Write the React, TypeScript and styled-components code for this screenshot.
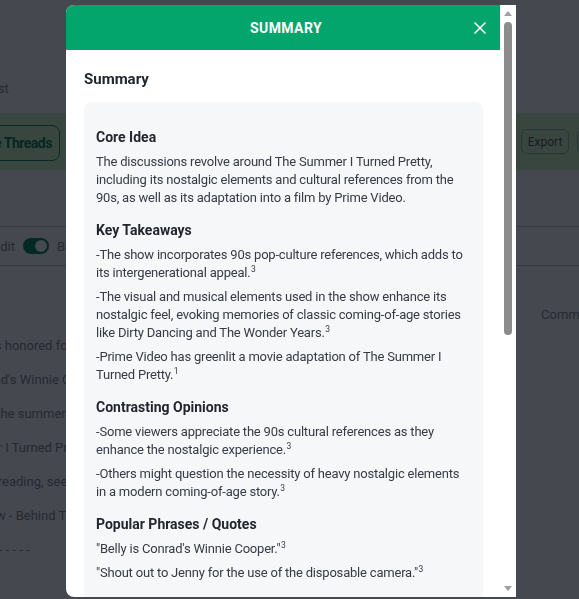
import React from 'react'
import styled, { createGlobalStyle } from 'styled-components'

const GlobalStyle = createGlobalStyle`
  html, body {
    margin: 0;
    padding: 0;
    height: 100%;
    overflow: hidden;
  }
  body {
    font-family: Roboto, "Liberation Sans", sans-serif;
    background: #fff;
  }
`

/* ---------- page behind the dialog ---------- */

const Page = styled.div`
  width: 760px;
  height: 100vh;
  margin-left: -80px;
  background: #fff;
  color: #8a8e95;
  font-size: 13px;
  display: flex;
  flex-direction: column;
`

const Crumbs = styled.div`
  height: 113px;
  box-sizing: border-box;
  display: flex;
  align-items: flex-end;
  padding: 0 0 15px 22px;
  line-height: 18px;
`

const ActionBand = styled.div`
  height: 57px;
  box-sizing: border-box;
  background: #d3f8c7;
  display: flex;
  align-items: flex-start;
  padding: 12px 58px 0 6px;
`

const OutlineButton = styled.button<{ $small?: boolean }>`
  font-family: inherit;
  background: transparent;
  border: 1.5px solid ${p => (p.$small ? '#8fbca5' : '#1f8a62')};
  border-radius: ${p => (p.$small ? '6px' : '8px')};
  color: ${p => (p.$small ? '#5a5e66' : '#138055')};
  font-size: ${p => (p.$small ? '12px' : '14px')};
  font-weight: ${p => (p.$small ? 400 : 700)};
  letter-spacing: ${p => (p.$small ? '0' : '-0.5px')};
  height: ${p => (p.$small ? '25px' : '36px')};
  margin-top: ${p => (p.$small ? '4px' : '0')};
  padding: 0 ${p => (p.$small ? '6px' : '7px')};
`

const RightGroup = styled.div`
  margin-left: auto;
  display: flex;
  gap: 8px;
`

const FilterRow = styled.div`
  margin-top: 56px;
  height: 40px;
  box-sizing: border-box;
  border-top: 1px solid #c9ccd1;
  border-bottom: 1px solid #c9ccd1;
  display: flex;
  align-items: center;
  gap: 8px;
  padding-left: 58px;
`

const Toggle = styled.span`
  width: 26px;
  height: 16px;
  border-radius: 8px;
  background: #0f8a5d;
  display: flex;
  justify-content: flex-end;
  align-items: center;
  padding: 0 2px;
  box-sizing: border-box;

  &::after {
    content: '';
    width: 12px;
    height: 12px;
    border-radius: 50%;
    background: #fff;
  }
`

const Table = styled.div`
  margin-top: 34px;
  display: flex;
  flex-direction: column;
`

const TableRow = styled.div<{ $head?: boolean }>`
  height: ${p => (p.$head ? '28px' : '34px')};
  display: flex;
  align-items: center;
  padding-left: 33px;
`

const TitleCell = styled.span`
  flex: 1;
  white-space: nowrap;
`

const CommentCell = styled.span`
  width: 139px;
`

/* ---------- dialog ---------- */

const Backdrop = styled.div`
  position: fixed;
  inset: 0;
  background: rgba(0, 4, 14, 0.73);
  display: flex;
  justify-content: center;
  align-items: flex-start;
  padding: 5px 0 0 3px;
  box-sizing: border-box;
`

const Dialog = styled.div`
  width: 450px;
  height: 592px;
  background: #fff;
  border-radius: 8px 0 0 8px;
  overflow: hidden;
  display: flex;
  color: #363b45;
`

const Scroller = styled.div`
  flex: 1;
  min-width: 0;
  overflow: hidden;
`

const ScrollRail = styled.div`
  width: 16px;
  flex-shrink: 0;
  background: #fff;
  display: flex;
  flex-direction: column;
`

const RailArrow = styled.div<{ $down?: boolean }>`
  height: 17px;
  display: flex;
  align-items: center;
  justify-content: center;

  &::before {
    content: '';
    width: 0;
    height: 0;
    border-left: 4.5px solid transparent;
    border-right: 4.5px solid transparent;
    ${p => (p.$down ? 'border-top' : 'border-bottom')}: 5px solid #a0a0a0;
  }
`

const RailTrack = styled.div`
  flex: 1;
  padding: 0 4px;
`

const RailThumb = styled.div<{ $size: number }>`
  height: ${p => p.$size}px;
  border-radius: 4px;
  background: #8c8c8c;
`

const Header = styled.header`
  height: 45px;
  background: #03a56d;
  display: grid;
  grid-template-columns: 1fr auto 1fr;
  align-items: center;
  padding: 0 8px 0 14px;
`

const HeaderTitle = styled.h2`
  grid-column: 2;
  margin: 0;
  color: #fff;
  font-size: 14px;
  font-weight: 700;
  letter-spacing: 0.4px;
`

const CloseButton = styled.button`
  justify-self: end;
  width: 24px;
  height: 24px;
  border: 0;
  background: transparent;
  padding: 0;
  display: flex;
  align-items: center;
  justify-content: center;
  cursor: pointer;
`

const Body = styled.div`
  padding: 19px 17px 24px 18px;
  display: flex;
  flex-direction: column;
  gap: 13px;
`

const Title = styled.h3`
  margin: 0;
  font-size: 15px;
  line-height: 20px;
  font-weight: 700;
  color: #22262e;
`

const Card = styled.div`
  background: #f6f7f9;
  border-radius: 8px;
  padding: 25px 12px 20px;
  display: flex;
  flex-direction: column;
  gap: 13px;
`

const Section = styled.section`
  display: flex;
  flex-direction: column;
  gap: 6px;
`

const SectionTitle = styled.h4`
  margin: 0;
  font-size: 14px;
  line-height: 20px;
  font-weight: 700;
  color: #22262e;
`

const Text = styled.p`
  margin: 0;
  font-size: 13px;
  line-height: 18px;
  letter-spacing: -0.2px;
`

const Ref = styled.sup`
  font-size: 8.5px;
  line-height: 0;
  vertical-align: baseline;
  position: relative;
  top: -5px;
  margin-left: 0.5px;
`

type Item = { text: string; refs?: string }

const sections: { title: string; items: Item[] }[] = [
  {
    title: 'Core Idea',
    items: [
      {
        text:
          'The discussions revolve around The Summer I Turned Pretty, including its nostalgic elements and cultural references from the 90s, as well as its adaptation into a film by Prime Video.',
      },
    ],
  },
  {
    title: 'Key Takeaways',
    items: [
      { text: '-The show incorporates 90s pop-culture references, which adds to its intergenerational appeal.', refs: '3' },
      {
        text:
          '-The visual and musical elements used in the show enhance its nostalgic feel, evoking memories of classic coming-of-age stories like Dirty Dancing and The Wonder Years.',
        refs: '3',
      },
      { text: '-Prime Video has greenlit a movie adaptation of The Summer I Turned Pretty.', refs: '1' },
    ],
  },
  {
    title: 'Contrasting Opinions',
    items: [
      { text: '-Some viewers appreciate the 90s cultural references as they enhance the nostalgic experience.', refs: '3' },
      { text: '-Others might question the necessity of heavy nostalgic elements in a modern coming-of-age story.', refs: '3' },
    ],
  },
  {
    title: 'Popular Phrases / Quotes',
    items: [
      { text: '"Belly is Conrad\'s Winnie Cooper."', refs: '3' },
      { text: '"Shout out to Jenny for the use of the disposable camera."', refs: '3' },
    ],
  },
  {
    title: 'Overall Sentiment',
    items: [
      {
        text:
          '-Fans are largely positive, praising the retro atmosphere and looking forward to seeing the story continue on the big screen.',
        refs: '1',
      },
      { text: '-A few viewers worry the film may not capture the pacing of the series.', refs: '2' },
    ],
  },
  {
    title: 'Sources',
    items: [
      { text: '1. Prime Video greenlights The Summer I Turned Pretty movie' },
      { text: '2. Who else is re-watching before the finale?' },
      { text: '3. The 90s references in this show are everything' },
    ],
  },
]

const rows = [
  'She was honored for her role',
  "Is Conrad's Winnie Cooper",
  'Binged the summer i turned pretty',
  'Summer I Turned Pretty finale',
  "I'm just reading, seeing all this",
  'A Review - Behind The Scenes',
  'Clip - - - - - - - -',
]

function CloseIcon() {
  return (
    <svg width="12" height="12" viewBox="0 0 12 12" fill="none">
      <path d="M1 1L11 11M11 1L1 11" stroke="#fff" strokeWidth="1.6" strokeLinecap="round" />
    </svg>
  )
}

export default function App() {
  return (
    <>
      <GlobalStyle />
      <Page>
        <Crumbs>Reddit Post</Crumbs>
        <ActionBand>
          <OutlineButton>Summarize Threads</OutlineButton>
          <RightGroup>
            <OutlineButton $small>Export</OutlineButton>
            <OutlineButton $small>Share</OutlineButton>
          </RightGroup>
        </ActionBand>
        <FilterRow>
          <span>Reddit</span>
          <Toggle />
          <span>Bluesky</span>
        </FilterRow>
        <Table>
          <TableRow $head>
            <TitleCell>Title</TitleCell>
            <CommentCell>Comments</CommentCell>
          </TableRow>
          {rows.map(r => (
            <TableRow key={r}>
              <TitleCell>{r}</TitleCell>
              <CommentCell />
            </TableRow>
          ))}
        </Table>
      </Page>

      <Backdrop>
        <Dialog role="dialog" aria-label="Summary">
          <Scroller>
            <Header>
              <HeaderTitle>SUMMARY</HeaderTitle>
              <CloseButton aria-label="Close">
                <CloseIcon />
              </CloseButton>
            </Header>
            <Body>
              <Title>Summary</Title>
              <Card>
                {sections.map(s => (
                  <Section key={s.title}>
                    <SectionTitle>{s.title}</SectionTitle>
                    {s.items.map(it => (
                      <Text key={it.text}>
                        {it.text}
                        {it.refs && <Ref>{it.refs}</Ref>}
                      </Text>
                    ))}
                  </Section>
                ))}
              </Card>
            </Body>
          </Scroller>
          <ScrollRail aria-hidden>
            <RailArrow />
            <RailTrack>
              <RailThumb $size={313} />
            </RailTrack>
            <RailArrow $down />
          </ScrollRail>
        </Dialog>
      </Backdrop>
    </>
  )
}
